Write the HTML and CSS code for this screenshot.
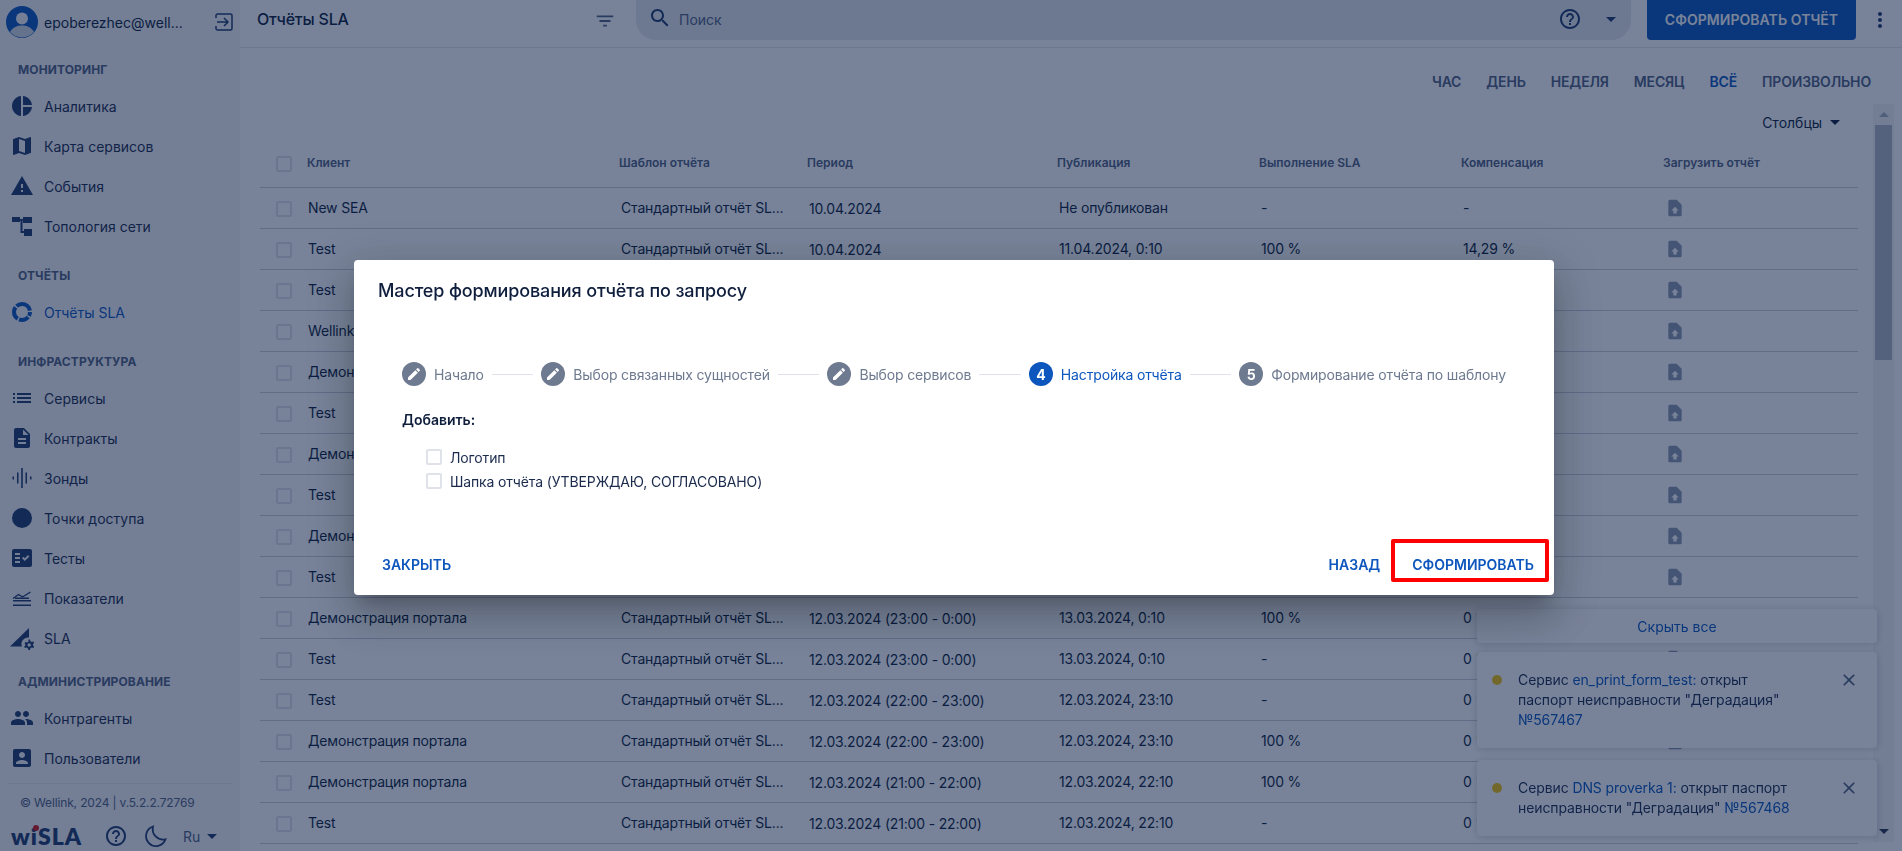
FILE: index.html
```html
<!DOCTYPE html>
<html lang="ru">
<head>
<meta charset="UTF-8" />
<meta name="viewport" content="width=device-width, initial-scale=1" />
<title>Отчёты SLA</title>
<link rel="stylesheet" href="styles.css">
</head>
<body>

<svg class="sprite" aria-hidden="true">
  <symbol id="i-pie" viewBox="0 0 24 24"><path d="M11 2v20c-5.07-.5-9-4.79-9-10s3.93-9.5 9-10zm2.03 0v8.99H22c-.47-4.74-4.24-8.52-8.97-8.99zm0 11.01V22c4.74-.47 8.5-4.25 8.97-8.99h-8.97z"/></symbol>
  <symbol id="i-map" viewBox="0 0 24 24"><path d="M20.5 3l-.16.03L15 5.1 9 3 3.36 4.9c-.21.07-.36.25-.36.48V20.5c0 .28.22.5.5.5l.16-.03L9 18.9l6 2.1 5.64-1.9c.21-.07.36-.25.36-.48V3.5c0-.28-.22-.5-.5-.5zM15 19l-6-2.11V5l6 2.11V19z"/></symbol>
  <symbol id="i-warn" viewBox="0 0 24 24"><path d="M1 21h22L12 2 1 21zm12-3h-2v-2h2v2zm0-4h-2v-4h2v4z"/></symbol>
  <symbol id="i-topo" viewBox="0 0 24 24"><path d="M2 3h8v5H2zM13 3h9v6h-9zM14 15h8v7h-8zM10 5h3v1.500h-3zM10.500 6h2v11h3.500v2h-5.500z"/></symbol>
  <symbol id="i-list" viewBox="0 0 24 24"><path d="M3 13h2v-2H3v2zm0 4h2v-2H3v2zm0-8h2V7H3v2zm4 4h14v-2H7v2zm0 4h14v-2H7v2zM7 7v2h14V7H7z"/></symbol>
  <symbol id="i-doc" viewBox="0 0 24 24"><path d="M14 2H6c-1.100 0-1.990.9-1.990 2L4 20c0 1.100.89 2 1.990 2H18c1.100 0 2-.9 2-2V8l-6-6zm2 16H8v-2h8v2zm0-4H8v-2h8v2zm-3-5V3.500L18.500 9H13z"/></symbol>
  <symbol id="i-probe" viewBox="0 0 24 24"><path d="M2.500 10.500h1.500v3H2.500zM7 6.500h1.500v11H7zM11.200 2h1.600v20h-1.600zM15.500 6.500H17v11h-1.500zM20 10.500h1.500v3H20z"/></symbol>
  <symbol id="i-dot" viewBox="0 0 24 24"><circle cx="12" cy="12" r="10"/></symbol>
  <symbol id="i-tests" viewBox="0 0 24 24"><path d="M20 3H4c-1.100 0-2 .9-2 2v14c0 1.100.9 2 2 2h16c1.100 0 2-.9 2-2V5c0-1.100-.9-2-2-2zM10 17H5v-2h5v2zm0-4H5v-2h5v2zm0-4H5V7h5v2zm4.820 6L12 12.160l1.410-1.410 1.410 1.420L17.990 9l1.420 1.420L14.820 15z"/></symbol>
  <symbol id="i-metrics" viewBox="0 0 24 24"><path d="M3 12.500l5.500-4 4 2.500 8-5" fill="none" stroke="currentColor" stroke-width="1.400"/><path d="M3 14h18v1.400H3zM3 18.500h18v1.500H3zM5 11.500h14V13H5z"/></symbol>
  <symbol id="i-sla" viewBox="0 0 24 24"><path d="M0 20.500L19 2v9.500a6.500 6.500 0 0 0-7 9z"/><path d="M18.500 13.500l1.500.1.400 1.700 1.300.7 1.600-.6.900 1.400-1.200 1.200v1.500l1.200 1.200-.9 1.400-1.600-.6-1.300.7-.4 1.700h-1.700l-.4-1.700-1.300-.7-1.600.6-.9-1.400 1.200-1.200V18.500L14.600 17.300l.9-1.400 1.600.6 1.300-.7zm.7 3.800a1.700 1.700 0 1 0 0 3.400 1.700 1.700 0 0 0 0-3.400z" fill-rule="evenodd"/></symbol>
  <symbol id="i-people" viewBox="0 0 24 24"><path d="M16 11c1.660 0 2.990-1.340 2.990-3S17.660 5 16 5c-1.660 0-3 1.340-3 3s1.340 3 3 3zm-8 0c1.660 0 2.990-1.340 2.990-3S9.660 5 8 5C6.340 5 5 6.340 5 8s1.340 3 3 3zm0 2c-2.330 0-7 1.170-7 3.500V19h14v-2.500c0-2.330-4.670-3.500-7-3.500zm8 0c-.29 0-.62.02-.97.05 1.160.84 1.970 1.970 1.970 3.450V19h6v-2.500c0-2.330-4.670-3.500-7-3.500z"/></symbol>
  <symbol id="i-user" viewBox="0 0 24 24"><path d="M3 5v14c0 1.100.89 2 2 2h14c1.100 0 2-.9 2-2V5c0-1.100-.9-2-2-2H5c-1.110 0-2 .9-2 2zm12 4c0 1.660-1.340 3-3 3s-3-1.340-3-3 1.340-3 3-3 3 1.340 3 3zm-9 8c0-2 4-3.100 6-3.100s6 1.100 6 3.100v1H6v-1z"/></symbol>
  <symbol id="i-help" viewBox="0 0 24 24"><path d="M11 18h2v-2h-2v2zm1-16C6.480 2 2 6.480 2 12s4.480 10 10 10 10-4.480 10-10S17.520 2 12 2zm0 18c-4.410 0-8-3.590-8-8s3.590-8 8-8 8 3.590 8 8-3.590 8-8 8zm0-14c-2.210 0-4 1.790-4 4h2c0-1.100.9-2 2-2s2 .9 2 2c0 2-3 1.750-3 5h2c0-2.250 3-2.500 3-5 0-2.210-1.790-4-4-4z"/></symbol>
  <symbol id="i-edit" viewBox="0 0 24 24"><path d="M3 17.250V21h3.750L17.810 9.940l-3.750-3.750L3 17.250zM20.710 7.040c.39-.39.39-1.020 0-1.410l-2.340-2.340c-.39-.39-1.020-.39-1.410 0l-1.830 1.830 3.750 3.750 1.830-1.830z"/></symbol>
  <symbol id="i-upload" viewBox="0 0 24 24"><path fill-rule="evenodd" d="M14 2H6c-1.100 0-2 .9-2 2v16c0 1.100.9 2 2 2h12c1.100 0 2-.9 2-2V8zM12 10.500l4.500 4.500H14v3.500h-4V15H7.500z"/></symbol>
  <symbol id="i-close" viewBox="0 0 24 24"><path d="M19 6.410L17.590 5 12 10.590 6.410 5 5 6.410 10.590 12 5 17.590 6.410 19 12 13.410 17.590 19 19 17.590 13.410 12z"/></symbol>
</svg>

<div class="app">
  <aside class="sidebar">
    <div class="profile">
      <svg class="avatar" viewBox="0 0 32 32">
        <circle cx="16" cy="16" r="16" fill="#0c56bd"/>
        <circle cx="16" cy="12.500" r="6" fill="#f5f6f8"/>
        <path d="M4 26c3-5 7-6.500 12-6.500s9 1.500 12 6.500a16 16 0 0 1-24 0z" fill="#d5d9e0"/>
      </svg>
      <span class="profile-mail">epoberezhec@well...</span>
      <svg class="logout stroke-icon" viewBox="0 0 20 20" stroke-width="1.500">
        <path d="M2 6V3.500C2 2.700 2.700 2 3.500 2h13c.8 0 1.500.7 1.500 1.500v13c0 .8-.7 1.500-1.500 1.500h-13C2.700 18 2 17.300 2 16.500V14"/>
        <path d="M3 10h11M10 6l4 4-4 4"/>
      </svg>
    </div>

    <nav class="nav">
      <div class="nav-label">Мониторинг</div>
      <a class="nav-item"><svg class="nav-icon"><use href="#i-pie"/></svg>Аналитика</a>
      <a class="nav-item"><svg class="nav-icon"><use href="#i-map"/></svg>Карта сервисов</a>
      <a class="nav-item"><svg class="nav-icon"><use href="#i-warn"/></svg>События</a>
      <a class="nav-item"><svg class="nav-icon"><use href="#i-topo"/></svg>Топология сети</a>

      <div class="nav-label nav-gap">Отчёты</div>
      <a class="nav-item active">
        <svg class="nav-icon stroke-icon" viewBox="0 0 24 24" stroke-width="4">
          <circle cx="12" cy="12" r="8" stroke-dasharray="4 1.500 10 1.500 13 1.500 17 1.500"/>
        </svg>Отчёты SLA
      </a>

      <div class="nav-label nav-gap">Инфраструктура</div>
      <a class="nav-item"><svg class="nav-icon"><use href="#i-list"/></svg>Сервисы</a>
      <a class="nav-item"><svg class="nav-icon"><use href="#i-doc"/></svg>Контракты</a>
      <a class="nav-item"><svg class="nav-icon"><use href="#i-probe"/></svg>Зонды</a>
      <a class="nav-item"><svg class="nav-icon"><use href="#i-dot"/></svg>Точки доступа</a>
      <a class="nav-item"><svg class="nav-icon"><use href="#i-tests"/></svg>Тесты</a>
      <a class="nav-item"><svg class="nav-icon"><use href="#i-metrics"/></svg>Показатели</a>
      <a class="nav-item"><svg class="nav-icon"><use href="#i-sla"/></svg>SLA</a>

      <div class="nav-label nav-gap-small">Администрирование</div>
      <a class="nav-item"><svg class="nav-icon"><use href="#i-people"/></svg>Контрагенты</a>
      <a class="nav-item"><svg class="nav-icon"><use href="#i-user"/></svg>Пользователи</a>
    </nav>

    <div class="side-footer">
      <div class="copyright">© Wellink, 2024 | v.5.2.2.72769</div>
      <div class="side-tools">
        <span class="logo">wiSLA</span>
        <svg class="tool-help"><use href="#i-help"/></svg>
        <svg class="tool-moon stroke-icon" viewBox="0 0 24 24" stroke-width="1.800">
          <path d="M9 2.500a10 10 0 1 0 12.500 12.800A10.500 10.500 0 0 1 9 2.500z"/>
        </svg>
        <span class="lang">Ru</span>
        <span class="caret"></span>
      </div>
    </div>
  </aside>

  <main class="main">
    <header class="topbar">
      <div class="page-title">Отчёты SLA</div>
      <svg class="filter" viewBox="0 0 24 24"><path d="M10 18h4v-2h-4v2zM3 6v2h18V6H3zm3 7h12v-2H6v2z"/></svg>
      <div class="search">
        <svg class="search-icon" viewBox="0 0 24 24"><path d="M15.500 14h-.79l-.28-.27C15.410 12.590 16 11.110 16 9.500 16 5.910 13.090 3 9.500 3S3 5.910 3 9.500 5.910 16 9.500 16c1.610 0 3.090-.59 4.230-1.570l.27.28v.79l5 4.990L20.490 19l-4.990-5zm-6 0C7.010 14 5 11.990 5 9.500S7.010 5 9.500 5 14 7.010 14 9.500 11.990 14 9.500 14z"/></svg>
        <span class="search-text">Поиск</span>
        <svg class="search-help"><use href="#i-help"/></svg>
        <span class="caret search-caret"></span>
      </div>
      <button class="primary-btn">Сформировать отчёт</button>
      <svg class="more" viewBox="0 0 24 24"><path d="M12 8c1.100 0 2-.9 2-2s-.9-2-2-2-2 .9-2 2 .9 2 2 2zm0 2c-1.100 0-2 .9-2 2s.9 2 2 2 2-.9 2-2-.9-2-2-2zm0 6c-1.100 0-2 .9-2 2s.9 2 2 2 2-.9 2-2-.9-2-2-2z"/></svg>
    </header>

    <div class="tabs">
      <span>Час</span><span>День</span><span>Неделя</span><span>Месяц</span><span class="tab-active">Всё</span><span>Произвольно</span>
    </div>

    <div class="work">
      <section class="content">
        <div class="columns-row">Столбцы <span class="caret caret-dark"></span></div>
        <table class="reports">
          <colgroup>
            <col class="c-client"><col class="c-tpl"><col class="c-period"><col class="c-std"><col class="c-std"><col class="c-std"><col>
          </colgroup>
          <thead>
            <tr><th><span class="client"><input type="checkbox" class="check">Клиент</span></th><th>Шаблон отчёта</th><th>Период</th><th>Публикация</th><th>Выполнение SLA</th><th>Компенсация</th><th>Загрузить отчёт</th></tr>
          </thead>
          <tbody>
            <tr><td><span class="client"><input type="checkbox" class="check">New SEA</span></td><td>Стандартный отчёт SL...</td><td class="period">10.04.2024</td><td>Не опубликован</td><td>-</td><td>-</td><td><svg class="up"><use href="#i-upload"/></svg></td></tr>
            <tr><td><span class="client"><input type="checkbox" class="check">Test</span></td><td>Стандартный отчёт SL...</td><td class="period">10.04.2024</td><td>11.04.2024, 0:10</td><td>100 %</td><td>14,29 %</td><td><svg class="up"><use href="#i-upload"/></svg></td></tr>
            <tr><td><span class="client"><input type="checkbox" class="check">Test</span></td><td>Стандартный отчёт SL...</td><td class="period">09.04.2024</td><td>10.04.2024, 0:10</td><td>100 %</td><td>0 %</td><td><svg class="up"><use href="#i-upload"/></svg></td></tr>
            <tr><td><span class="client"><input type="checkbox" class="check">Wellink</span></td><td>Стандартный отчёт SL...</td><td class="period">09.04.2024</td><td>10.04.2024, 0:10</td><td>100 %</td><td>0 %</td><td><svg class="up"><use href="#i-upload"/></svg></td></tr>
            <tr><td><span class="client"><input type="checkbox" class="check">Демонстрация портала</span></td><td>Стандартный отчёт SL...</td><td class="period">13.03.2024</td><td>14.03.2024, 0:10</td><td>100 %</td><td>0 %</td><td><svg class="up"><use href="#i-upload"/></svg></td></tr>
            <tr><td><span class="client"><input type="checkbox" class="check">Test</span></td><td>Стандартный отчёт SL...</td><td class="period">13.03.2024</td><td>14.03.2024, 0:10</td><td>-</td><td>0 %</td><td><svg class="up"><use href="#i-upload"/></svg></td></tr>
            <tr><td><span class="client"><input type="checkbox" class="check">Демонстрация портала</span></td><td>Стандартный отчёт SL...</td><td class="period">13.03.2024 (1:00 - 2:00)</td><td>13.03.2024, 2:10</td><td>100 %</td><td>0 %</td><td><svg class="up"><use href="#i-upload"/></svg></td></tr>
            <tr><td><span class="client"><input type="checkbox" class="check">Test</span></td><td>Стандартный отчёт SL...</td><td class="period">13.03.2024 (1:00 - 2:00)</td><td>13.03.2024, 2:10</td><td>-</td><td>0 %</td><td><svg class="up"><use href="#i-upload"/></svg></td></tr>
            <tr><td><span class="client"><input type="checkbox" class="check">Демонстрация портала</span></td><td>Стандартный отчёт SL...</td><td class="period">13.03.2024 (0:00 - 1:00)</td><td>13.03.2024, 1:10</td><td>100 %</td><td>0 %</td><td><svg class="up"><use href="#i-upload"/></svg></td></tr>
            <tr><td><span class="client"><input type="checkbox" class="check">Test</span></td><td>Стандартный отчёт SL...</td><td class="period">13.03.2024 (0:00 - 1:00)</td><td>13.03.2024, 1:10</td><td>-</td><td>0 %</td><td><svg class="up"><use href="#i-upload"/></svg></td></tr>
            <tr><td><span class="client"><input type="checkbox" class="check">Демонстрация портала</span></td><td>Стандартный отчёт SL...</td><td class="period">12.03.2024 (23:00 - 0:00)</td><td>13.03.2024, 0:10</td><td>100 %</td><td>0 %</td><td><svg class="up"><use href="#i-upload"/></svg></td></tr>
            <tr><td><span class="client"><input type="checkbox" class="check">Test</span></td><td>Стандартный отчёт SL...</td><td class="period">12.03.2024 (23:00 - 0:00)</td><td>13.03.2024, 0:10</td><td>-</td><td>0 %</td><td><svg class="up"><use href="#i-upload"/></svg></td></tr>
            <tr><td><span class="client"><input type="checkbox" class="check">Test</span></td><td>Стандартный отчёт SL...</td><td class="period">12.03.2024 (22:00 - 23:00)</td><td>12.03.2024, 23:10</td><td>-</td><td>0 %</td><td><svg class="up"><use href="#i-upload"/></svg></td></tr>
            <tr><td><span class="client"><input type="checkbox" class="check">Демонстрация портала</span></td><td>Стандартный отчёт SL...</td><td class="period">12.03.2024 (22:00 - 23:00)</td><td>12.03.2024, 23:10</td><td>100 %</td><td>0 %</td><td><svg class="up"><use href="#i-upload"/></svg></td></tr>
            <tr><td><span class="client"><input type="checkbox" class="check">Демонстрация портала</span></td><td>Стандартный отчёт SL...</td><td class="period">12.03.2024 (21:00 - 22:00)</td><td>12.03.2024, 22:10</td><td>100 %</td><td>0 %</td><td><svg class="up"><use href="#i-upload"/></svg></td></tr>
            <tr><td><span class="client"><input type="checkbox" class="check">Test</span></td><td>Стандартный отчёт SL...</td><td class="period">12.03.2024 (21:00 - 22:00)</td><td>12.03.2024, 22:10</td><td>-</td><td>0 %</td><td><svg class="up"><use href="#i-upload"/></svg></td></tr>
          </tbody>
        </table>
      </section>

      <div class="scrollbar">
        <span class="sb-arrow sb-up"></span>
        <span class="sb-thumb"></span>
        <span class="sb-arrow sb-down"></span>
      </div>
    </div>
  </main>
</div>

<div class="notices">
  <button class="notice-hide">Скрыть все</button>
  <div class="notice">
    <span class="notice-dot"></span>
    <p>Сервис <a>en_print_form_test:</a> открыт паспорт неисправности "Деградация" <a>№567467</a></p>
    <svg class="notice-close"><use href="#i-close"/></svg>
  </div>
  <div class="notice">
    <span class="notice-dot"></span>
    <p>Сервис <a>DNS proverka 1:</a> открыт паспорт неисправности "Деградация" <a>№567468</a></p>
    <svg class="notice-close"><use href="#i-close"/></svg>
  </div>
</div>

<div class="backdrop">
  <div class="modal">
    <h2>Мастер формирования отчёта по запросу</h2>

    <div class="stepper">
      <div class="step"><span class="step-num"><svg class="step-edit"><use href="#i-edit"/></svg></span>Начало</div>
      <span class="step-line"></span>
      <div class="step"><span class="step-num"><svg class="step-edit"><use href="#i-edit"/></svg></span>Выбор связанных сущностей</div>
      <span class="step-line"></span>
      <div class="step"><span class="step-num"><svg class="step-edit"><use href="#i-edit"/></svg></span>Выбор сервисов</div>
      <span class="step-line"></span>
      <div class="step current"><span class="step-num">4</span>Настройка отчёта</div>
      <span class="step-line"></span>
      <div class="step"><span class="step-num">5</span>Формирование отчёта по шаблону</div>
    </div>

    <div class="options">
      <div class="options-title">Добавить:</div>
      <label class="option"><input type="checkbox" class="check">Логотип</label>
      <label class="option"><input type="checkbox" class="check">Шапка отчёта (УТВЕРЖДАЮ, СОГЛАСОВАНО)</label>
    </div>

    <div class="modal-actions">
      <button class="text-btn">Закрыть</button>
      <button class="text-btn back-btn">Назад</button>
      <button class="text-btn marked">Сформировать</button>
    </div>
  </div>
</div>

</body>
</html>
```

FILE: styles.css
```css
* {
  box-sizing: border-box;
}

html, body {
  height: 100%;
}

body {
  margin: 0;
  overflow: hidden;
  background-color: white;
  color: #0f1e3c;
  font-family: Inter, "Noto Sans", sans-serif;
  font-size: 14px;
}

.sprite {
  display: none;
}

svg {
  fill: currentColor;
  flex-shrink: 0;
}

.stroke-icon {
  fill: none;
  stroke: currentColor;
}

button {
  font-family: inherit;
  border: none;
  background: none;
  cursor: pointer;
}

.app {
  display: flex;
  height: 100vh;
}

/* sidebar */
.sidebar {
  width: 240px;
  flex-shrink: 0;
  display: flex;
  flex-direction: column;
  background-color: #f5f5f6;
  color: #1f3a6e;
}

.profile {
  height: 40px;
  padding: 4px 0 0 6px;
  display: flex;
  align-items: center;
  flex-shrink: 0;
}

.avatar {
  width: 32px;
  height: 32px;
}

.profile-mail {
  margin-left: 6px;
  color: #0f1e3c;
}

.logout {
  width: 20px;
  height: 20px;
  margin-left: 31px;
}

.nav {
  padding-top: 11px;
}

.nav-label {
  height: 35px;
  line-height: 37px;
  padding-left: 18px;
  font-size: 12px;
  font-weight: 700;
  letter-spacing: 0.1px;
  text-transform: uppercase;
  color: #51607f;
}

.nav-gap {
  margin-top: 11px;
}

.nav-gap-small {
  margin-top: 5px;
}

.nav-item {
  height: 40px;
  padding-left: 10px;
  display: flex;
  align-items: center;
  gap: 10px;
  color: #1b2b4d;
  cursor: pointer;
}

.nav-icon {
  width: 24px;
  height: 24px;
  color: #1f3a6e;
}

.nav-item.active, .nav-item.active .nav-icon {
  color: #0c56bd;
}

.side-footer {
  margin-top: auto;
  margin-left: 8px;
  margin-right: 8px;
  border-top: 1px solid #e4e6ea;
}

.copyright {
  padding: 11px 0 0 12px;
  font-size: 12px;
  line-height: 16px;
  letter-spacing: -0.15px;
  color: #51607f;
}

.side-tools {
  height: 30px;
  margin-top: 10px;
  padding-left: 3px;
  display: flex;
  align-items: center;
  color: #1f3a6e;
}

.logo {
  position: relative;
  width: 72px;
  font-size: 23px;
  font-weight: 800;
  letter-spacing: 1px;
  font-family: Lato, Inter, sans-serif;
}

.logo::after {
  content: "";
  position: absolute;
  left: 22px;
  top: 3px;
  width: 6px;
  height: 6px;
  border-radius: 50%;
  background-color: #d3191c;
}

.tool-help {
  width: 24px;
  height: 24px;
  margin-left: 21px;
}

.tool-moon {
  width: 24px;
  height: 24px;
  margin-left: 16px;
}

.lang {
  margin-left: 15px;
  color: #51607f;
  font-size: 14px;
}

.caret {
  display: inline-block;
  width: 0;
  height: 0;
  margin-left: 7px;
  border-left: 5px solid transparent;
  border-right: 5px solid transparent;
  border-top: 5px solid #1f3a6e;
}

/* main */
.main {
  flex: 1;
  min-width: 0;
  display: flex;
  flex-direction: column;
}

.topbar {
  height: 48px;
  flex-shrink: 0;
  display: flex;
  padding-left: 17px;
  border-bottom: 1px solid #e4e7ec;
}

.page-title {
  width: 337px;
  line-height: 39px;
  font-size: 16px;
  font-weight: 500;
  letter-spacing: -0.2px;
}

.filter {
  width: 22px;
  height: 22px;
  margin: 10px 0 0 0;
  color: #51607f;
}

.search {
  width: 995px;
  height: 40px;
  margin-left: 20px;
  padding: 0 0 2px 12px;
  display: flex;
  align-items: center;
  border-radius: 0 0 20px 20px;
  background-color: #e6e8ec;
}

.search-icon {
  width: 24px;
  height: 24px;
  margin-top: -2px;
  color: #1f3a6e;
}

.search-text {
  margin-left: 7px;
  color: #51607f;
}

.search-help {
  width: 24px;
  height: 24px;
  margin-left: auto;
  margin-right: 24px;
  color: #1f3a6e;
}

.search-caret {
  margin: 0 15px 0 0;
}

.primary-btn {
  width: 209px;
  height: 40px;
  margin-left: 16px;
  padding: 0 0 2px;
  border-radius: 0 0 4px 4px;
  background-color: #0c56bd;
  color: white;
  font-size: 14px;
  font-weight: 600;
  letter-spacing: 0.05px;
  text-transform: uppercase;
}

.more {
  width: 24px;
  height: 24px;
  margin: 8px 0 0 12px;
  color: #1f3a6e;
}

.tabs {
  height: 54px;
  flex-shrink: 0;
  padding: 14px 31px 0 0;
  display: flex;
  justify-content: flex-end;
  gap: 25px;
  line-height: 40px;
  font-weight: 600;
  letter-spacing: -0.15px;
  text-transform: uppercase;
  color: #51607f;
}

.tab-active {
  color: #0c56bd;
}

.work {
  flex: 1;
  min-height: 0;
  display: flex;
  padding-left: 20px;
}

.content {
  width: 1598px;
  flex-shrink: 0;
}

.columns-row {
  height: 40px;
  padding-right: 18px;
  display: flex;
  justify-content: flex-end;
  align-items: center;
  white-space: pre;
}

.caret-dark {
  border-top-color: #0f1e3c;
  margin-left: 4px;
}

/* table */
.reports {
  width: 100%;
  table-layout: fixed;
  border-collapse: separate;
  border-spacing: 0;
}

.c-client { width: 353px; }
.c-tpl { width: 188px; }
.c-period { width: 250px; }
.c-std { width: 202px; }

.reports th {
  height: 46px;
  padding: 0 0 5px 6px;
  border-bottom: 1px solid #c9ced8;
  text-align: left;
  font-size: 12px;
  font-weight: 600;
  color: #51607f;
}

.reports td {
  height: 41px;
  padding: 0 0 2px 8px;
  border-bottom: 1px solid #c9ced8;
  white-space: nowrap;
  letter-spacing: -0.17px;
}

.reports td.period {
  padding-bottom: 0;
}

.reports th:first-child, .reports td:first-child {
  padding-left: 16px;
}

.client {
  display: flex;
  align-items: center;
}

th .client {
  gap: 15px;
}

td .client {
  gap: 16px;
}

.client .check {
  margin-top: 4px;
}

.check {
  appearance: none;
  width: 16px;
  height: 16px;
  margin: 0;
  flex-shrink: 0;
  border: 2px solid #dfe2e8;
  border-radius: 2px;
  background-color: white;
}

.up {
  width: 20px;
  height: 20px;
  margin: 2px 0 0 0;
  display: block;
  color: #8c98ae;
}

/* fake scrollbar */
.scrollbar {
  width: 21px;
  height: 738px;
  margin: 2px 0 0 15px;
  padding: 0 2px;
  display: flex;
  flex-direction: column;
  align-items: center;
  background-color: #f3f4f6;
}

.sb-arrow {
  height: 21px;
  width: 100%;
  display: flex;
  justify-content: center;
  align-items: center;
}

.sb-arrow::after {
  content: "";
  border-left: 5px solid transparent;
  border-right: 5px solid transparent;
}

.sb-up::after {
  border-bottom: 5px solid #a8aebb;
}

.sb-down {
  margin-top: auto;
}

.sb-down::after {
  border-top: 5px solid #2a3650;
}

.sb-thumb {
  width: 100%;
  height: 235px;
  background-color: #b2b7c1;
}

/* notifications */
.notices {
  position: fixed;
  top: 609px;
  right: 25px;
  width: 400px;
  display: flex;
  flex-direction: column;
  gap: 9px;
}

.notice-hide {
  height: 34px;
  border-radius: 4px;
  background-color: white;
  color: #0c56bd;
  font-size: 14px;
  box-shadow: 0 1px 8px rgba(15, 30, 60, 0.2);
}

.notice {
  display: flex;
  padding: 18px 18px 18px 15px;
  border-radius: 4px;
  background-color: white;
  box-shadow: 0 1px 8px rgba(15, 30, 60, 0.2);
}

.notice + .notice {
  margin-top: 3px;
}

.notice-dot {
  width: 10px;
  height: 10px;
  margin-top: 5px;
  flex-shrink: 0;
  border-radius: 50%;
  background-color: #f2c40f;
}

.notice p {
  margin: 0 0 0 16px;
  width: 285px;
  line-height: 20px;
  letter-spacing: -0.1px;
  color: #1b2b4d;
}

.notice p a {
  color: #0c56bd;
}

.notice-close {
  width: 20px;
  height: 20px;
  margin-left: auto;
  color: #51607f;
}

/* modal */
.backdrop {
  position: fixed;
  inset: 0;
  display: flex;
  justify-content: center;
  align-items: flex-start;
  padding: 260px 0 0 6px;
  background-color: rgba(10, 30, 70, 0.55);
}

.modal {
  width: 1200px;
  border-radius: 4px;
  background-color: white;
  box-shadow: 0 11px 15px -7px rgba(0, 0, 0, 0.2), 0 24px 38px 3px rgba(0, 0, 0, 0.14), 0 9px 46px 8px rgba(0, 0, 0, 0.12);
}

.modal h2 {
  margin: 0;
  padding: 20px 24px;
  font-size: 18px;
  line-height: 22px;
  font-weight: 500;
  letter-spacing: -0.13px;
  color: #0f1e3c;
}

.stepper {
  margin: 40px 48px 0;
  display: flex;
  align-items: center;
}

.step {
  display: flex;
  align-items: center;
  gap: 8px;
  white-space: nowrap;
  letter-spacing: -0.15px;
  color: #6e7a90;
}

.step-num {
  width: 24px;
  height: 24px;
  display: flex;
  justify-content: center;
  align-items: center;
  border-radius: 50%;
  background-color: #6e7a90;
  color: white;
  font-size: 14px;
  font-weight: 700;
}

.step-edit {
  width: 16px;
  height: 16px;
}

.step.current {
  color: #0c56bd;
}

.step.current .step-num {
  background-color: #0c56bd;
}

.step-line {
  flex: 1;
  height: 1px;
  margin: 0 8px;
  background-color: #dfe2e8;
}

.options {
  margin: 24px 48px 0;
}

.options-title {
  line-height: 20px;
  font-weight: 600;
  margin-bottom: 15px;
}

.option {
  height: 24px;
  padding-left: 24px;
  display: flex;
  align-items: center;
  gap: 8px;
  letter-spacing: -0.13px;
  color: #1b2b4d;
}

.modal-actions {
  margin-top: 46px;
  padding: 0 5px 13px 20px;
  display: flex;
  align-items: center;
  gap: 3px;
}

.text-btn {
  height: 36px;
  padding: 7px 8px 0;
  color: #0c56bd;
  font-size: 14px;
  font-weight: 600;
  text-transform: uppercase;
}

.back-btn {
  margin-left: auto;
}

.text-btn.marked {
  height: 43px;
  padding: 7px 11px 0 17px;
  border: 4px solid #f00;
  border-radius: 2px;
}
```
